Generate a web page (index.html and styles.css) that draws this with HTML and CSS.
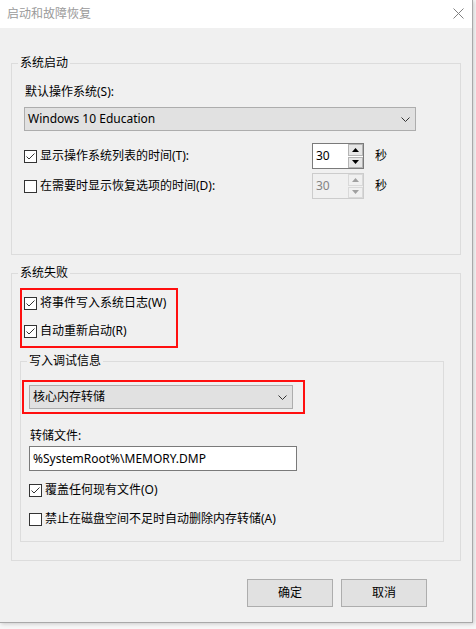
FILE: index.html
```html
<!DOCTYPE html>
<html lang="zh-CN">
<head>
<meta charset="utf-8">
<title>启动和故障恢复</title>
<link rel="stylesheet" href="styles.css">
</head>
<body>
<div class="window">
  <div class="titlebar">
    <span class="title">启动和故障恢复</span>
    <svg class="close" width="11" height="11" viewBox="0 0 11 11"><path d="M0.5 0.5L10.5 10.5M10.5 0.5L0.5 10.5" stroke="#808080" stroke-width="1" fill="none"/></svg>
  </div>
  <div class="content">
    <fieldset class="group">
      <legend>系统启动</legend>
      <div class="startup-body">
        <div class="label">默认操作系统(S):</div>
        <div class="combo combo-os">
          <span>Windows 10 Education</span>
          <svg class="chev" width="9" height="5" viewBox="0 0 9 5"><path d="M0.5 0.5L4.5 4.5L8.5 0.5" stroke="#333" fill="none"/></svg>
        </div>
        <div class="spin-row">
          <div class="check">
            <svg class="box" viewBox="0 0 13 13"><rect x="0.5" y="0.5" width="12" height="12" fill="#fff" stroke="#333"/><path d="M2.5 6.5L5 9L10.5 3.5" fill="none" stroke="#333"/></svg>
            <span>显示操作系统列表的时间(T):</span>
          </div>
          <div class="spin">
            <div class="spin-input">30</div>
            <div class="spin-btns">
              <span class="sbtn"><svg width="7" height="4" viewBox="0 0 7 4"><path d="M3.5 0L7 4H0Z" fill="#000"/></svg></span>
              <span class="sbtn"><svg width="7" height="4" viewBox="0 0 7 4"><path d="M0 0H7L3.5 4Z" fill="#000"/></svg></span>
            </div>
          </div>
          <span class="unit">秒</span>
        </div>
        <div class="spin-row">
          <div class="check">
            <svg class="box" viewBox="0 0 13 13"><rect x="0.5" y="0.5" width="12" height="12" fill="#fff" stroke="#333"/></svg>
            <span>在需要时显示恢复选项的时间(D):</span>
          </div>
          <div class="spin disabled">
            <div class="spin-input">30</div>
            <div class="spin-btns">
              <span class="sbtn"><svg width="7" height="4" viewBox="0 0 7 4"><path d="M3.5 0L7 4H0Z" fill="#a0a0a0"/></svg></span>
              <span class="sbtn"><svg width="7" height="4" viewBox="0 0 7 4"><path d="M0 0H7L3.5 4Z" fill="#a0a0a0"/></svg></span>
            </div>
          </div>
          <span class="unit">秒</span>
        </div>
      </div>
    </fieldset>

    <fieldset class="group fail-group">
      <legend>系统失败</legend>
      <div class="fail-body">
        <div class="red red1">
          <div class="check">
            <svg class="box" viewBox="0 0 13 13"><rect x="0.5" y="0.5" width="12" height="12" fill="#fff" stroke="#333"/><path d="M2.5 6.5L5 9L10.5 3.5" fill="none" stroke="#333"/></svg>
            <span>将事件写入系统日志(W)</span>
          </div>
          <div class="check">
            <svg class="box" viewBox="0 0 13 13"><rect x="0.5" y="0.5" width="12" height="12" fill="#fff" stroke="#333"/><path d="M2.5 6.5L5 9L10.5 3.5" fill="none" stroke="#333"/></svg>
            <span>自动重新启动(R)</span>
          </div>
        </div>
        <fieldset class="debug-group">
          <legend>写入调试信息</legend>
          <div class="debug-body">
            <div class="red red2">
              <div class="combo combo-dump">
                <span>核心内存转储</span>
                <svg class="chev" width="9" height="5" viewBox="0 0 9 5"><path d="M0.5 0.5L4.5 4.5L8.5 0.5" stroke="#333" fill="none"/></svg>
              </div>
            </div>
            <div class="debug-inner">
              <div class="label file-label">转储文件:</div>
              <div class="textbox">%SystemRoot%\MEMORY.DMP</div>
              <div class="check check-o">
                <svg class="box" viewBox="0 0 13 13"><rect x="0.5" y="0.5" width="12" height="12" fill="#fff" stroke="#333"/><path d="M2.5 6.5L5 9L10.5 3.5" fill="none" stroke="#333"/></svg>
                <span>覆盖任何现有文件(O)</span>
              </div>
              <div class="check check-a">
                <svg class="box" viewBox="0 0 13 13"><rect x="0.5" y="0.5" width="12" height="12" fill="#fff" stroke="#333"/></svg>
                <span>禁止在磁盘空间不足时自动删除内存转储(A)</span>
              </div>
            </div>
          </div>
        </fieldset>
      </div>
    </fieldset>
  </div>
  <div class="buttons">
    <div class="btn">确定</div>
    <div class="btn">取消</div>
  </div>
</div>
</body>
</html>
```

FILE: styles.css
```css
* { box-sizing: border-box; }
html, body { margin: 0; padding: 0; }
body {
  width: 476px;
  height: 629px;
  overflow: hidden;
  background: #f7f7f7;
  font-family: "Noto Sans", "Noto Sans CJK SC", sans-serif;
  font-size: 12px;
  line-height: 16px;
  color: #000;
}
.window {
  width: 473px;
  height: 623px;
  background: #f0f0f0;
  border-right: 1px solid #a9a9a9;
  border-bottom: 1px solid #a9a9a9;
  box-shadow: 1px 1px 4px rgba(0,0,0,0.18);
  display: flex;
  flex-direction: column;
}
.titlebar {
  flex: none;
  height: 28px;
  background: #fff;
  display: flex;
  align-items: center;
  justify-content: space-between;
  padding: 0 8px 0 7px;
}
.title { color: #9a9a9a; }
.close { display: block; margin-top: -2px; }
.content { padding: 27px 0 0 11px; }
fieldset {
  margin: 0;
  padding: 0;
  border: 1px solid #dcdcdc;
  min-width: 0;
}
legend {
  margin-left: 6px;
  padding: 0 2px;
  line-height: 16px;
}
.group { width: 450px; }
.startup-body { padding: 13px 0 55px 12px; }
.label { padding-left: 1px; }
.combo {
  height: 24px;
  background: #e1e1e1;
  border: 1px solid #adadad;
  display: flex;
  align-items: center;
  justify-content: space-between;
  padding: 0 5px 0 3px;
}
.combo-os { width: 392px; margin-top: 7px; }
.chev { display: block; }
.spin-row {
  display: flex;
  align-items: center;
  height: 26px;
  margin-top: 12px;
}
.spin-row + .spin-row { margin-top: 4px; }
.check { display: flex; align-items: center; gap: 3px; height: 16px; }
.spin-row .check { width: 288px; }
.box { width: 13px; height: 13px; flex: none; display: block; }
.spin {
  display: flex;
  width: 52px;
  height: 26px;
  border: 1px solid #7a7a7a;
  background: #fff;
}
.spin-input { width: 35px; padding-left: 3px; line-height: 24px; }
.spin-btns {
  width: 15px;
  display: flex;
  flex-direction: column;
  gap: 1px;
  background: #fff;
  padding: 0;
}
.sbtn {
  flex: 1;
  background: #e6e6e6;
  border: 1px solid #b4b4b4;
  display: flex;
  align-items: center;
  justify-content: center;
}
.sbtn svg { display: block; }
.spin.disabled { border-color: #cccccc; background: #f0f0f0; }
.spin.disabled .spin-input { color: #838383; }
.spin.disabled .spin-btns { background: #f0f0f0; }
.spin.disabled .sbtn { background: #f0f0f0; border-color: #d9d9d9; }
.unit { margin-left: 11px; }
.fail-group { margin-top: 10px; }
.fail-body { padding: 7px 0 18px 8px; }
.red { border: 2px solid #ff0f0f; }
.red1 {
  width: 158px;
  padding: 5px 0 7px 2px;
  display: flex;
  flex-direction: column;
  gap: 12px;
}
.debug-group { margin-top: 5px; width: 424px; }
.debug-body { padding: 11px 0 14px 0; }
.red2 {
  margin-left: 1px;
  width: 283px;
  height: 34px;
  padding: 3px 0 0 5px;
}
.combo-dump { width: 264px; }
.debug-inner { padding-left: 8px; }
.file-label { margin-top: 14px; }
.textbox {
  margin-top: 2px;
  width: 268px;
  height: 25px;
  background: #fff;
  border: 1px solid #7a7a7a;
  padding-left: 3px;
  line-height: 23px;
}
.check-o { margin-top: 11px; }
.check-a { margin-top: 13px; }
.buttons {
  margin-top: 18px;
  display: flex;
  justify-content: flex-end;
  gap: 8px;
  padding-right: 45px;
}
.btn {
  width: 86px;
  height: 28px;
  background: #e1e1e1;
  border: 1px solid #adadad;
  display: flex;
  align-items: center;
  justify-content: center;
}
```
